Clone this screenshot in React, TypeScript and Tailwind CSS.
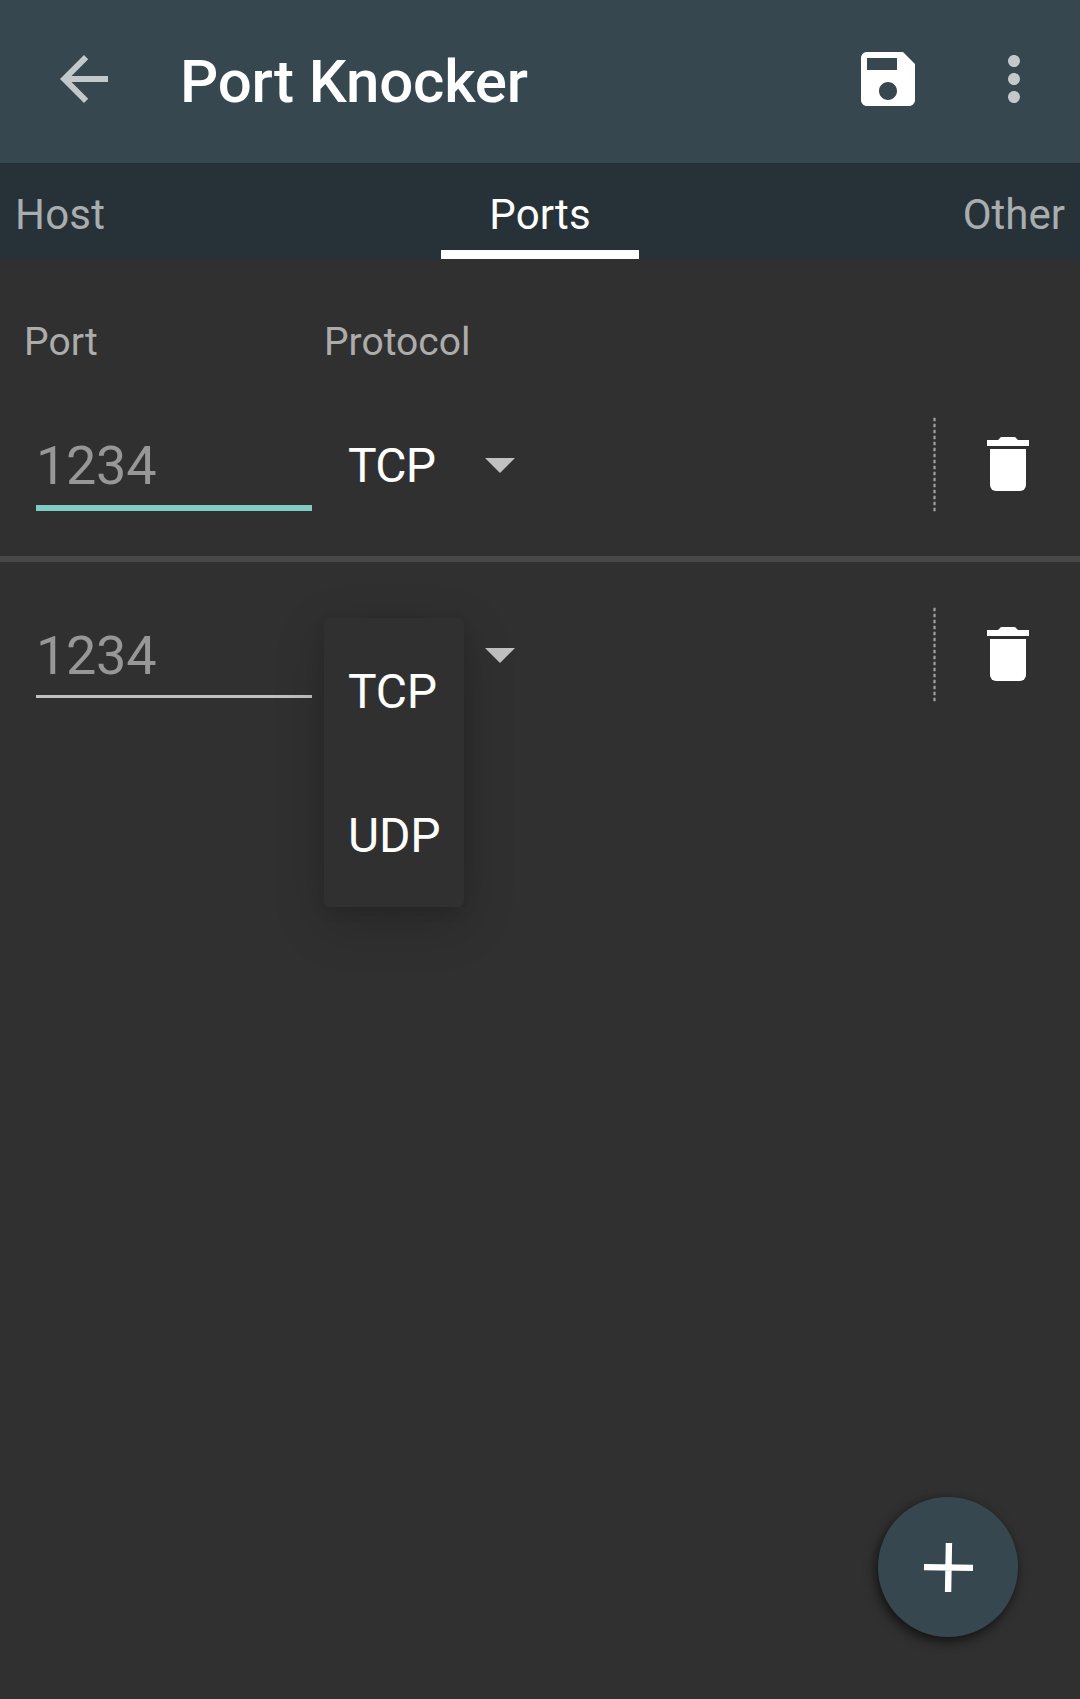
import React from "react";

const ARROW_BACK = "M20 11H7.83l5.59-5.59L12 4l-8 8 8 8 1.41-1.41L7.83 13H20v-2z";
const SAVE =
  "M17 3H5c-1.11 0-2 .9-2 2v14c0 1.1.89 2 2 2h14c1.1 0 2-.9 2-2V7l-4-4zm-5 16c-1.66 0-3-1.34-3-3s1.34-3 3-3 3 1.34 3 3-1.34 3-3 3zm3-10H5V5h10v4z";
const MORE =
  "M12 8c1.1 0 2-.9 2-2s-.9-2-2-2-2 .9-2 2 .9 2 2 2zm0 2c-1.1 0-2 .9-2 2s.9 2 2 2 2-.9 2-2-.9-2-2-2zm0 6c-1.1 0-2 .9-2 2s.9 2 2 2 2-.9 2-2-.9-2-2-2z";

function Icon({ d, className = "" }: { d: string; className?: string }) {
  return (
    <svg viewBox="0 0 24 24" className={`size-[72px] shrink-0 fill-current ${className}`}>
      <path d={d} />
    </svg>
  );
}

function TrashIcon() {
  return (
    <svg viewBox="0 0 72 72" className="size-[72px] fill-white">
      <path d="M15 12h11l3-3h14l3 3h11v6H15z" />
      <path d="M18 21h36v36a6 6 0 0 1-6 6H24a6 6 0 0 1-6-6z" />
    </svg>
  );
}

function DottedLine() {
  return (
    <svg viewBox="0 0 3 96" className="h-24 w-[3px]" stroke="#a0a0a0">
      <line x1="1.5" y1="1.8" x2="1.5" y2="96" strokeWidth="2.2" strokeDasharray="3.4 2.6" />
    </svg>
  );
}

function Dropdown() {
  return (
    <ul className="absolute top-[56px] left-0 z-10 h-[289px] w-[140px] rounded-[6px] bg-[#303030] shadow-[0_16px_52px_rgba(0,0,0,0.19),0_4px_14px_rgba(0,0,0,0.1)]">
      {["TCP", "UDP"].map((name) => (
        <li key={name} className="h-[144px] pt-[2px] pl-6 text-[48px] leading-[144px] tracking-[-0.2px]">
          {name}
        </li>
      ))}
    </ul>
  );
}

function PortRow({ focused = false, open = false }: { focused?: boolean; open?: boolean }) {
  return (
    <div className="flex h-[184px]">
      <div className="w-[324px] pr-3 pl-9">
        <div
          className={
            focused
              ? "h-[139px] border-b-[6px] border-[#80cbc4]"
              : "h-[136px] border-b-[3px] border-[#c1c1c1]"
          }
        >
          <span className="block pt-[62px] text-[54px] leading-[64px] tracking-[-0.3px] text-[#979797]">1234</span>
        </div>
      </div>
      <div className="relative flex w-[216px] items-center">
        <span className="w-[161px] pt-[3px] pl-6 text-[48px] leading-[56px] tracking-[-0.7px]">
          {open ? "" : "TCP"}
        </span>
        <svg viewBox="0 0 30 15" className="mt-[3px] h-[15px] w-[30px] fill-[#c1c1c1]">
          <path d="M0 0h30L15 15z" />
        </svg>
        {open && <Dropdown />}
      </div>
      <div className="ml-auto flex items-center gap-9 pr-9">
        <DottedLine />
        <TrashIcon />
      </div>
    </div>
  );
}

export default function App() {
  return (
    <main className="relative h-[1699px] w-[1080px] overflow-hidden bg-[#303030] font-[Roboto,sans-serif] text-white">
      <header className="flex h-[163px] items-center bg-[#37474f] pr-[30px] pl-12">
        <Icon d={ARROW_BACK} className="-mt-[5px] text-[#c3c8ca]" />
        <h1 className="ml-[60px] text-[60px] leading-[72px] font-medium tracking-[-0.17px]">Port Knocker</h1>
        <Icon d={SAVE} className="-mt-[5px] ml-auto" />
        <Icon d={MORE} className="-mt-[5px] ml-[54px] text-[#c3c8ca]" />
      </header>

      <nav className="grid h-24 grid-cols-[1fr_198px_1fr] bg-[#263238] pt-[7px] text-[42px] leading-[89px] text-[#a8adaf]">
        <span className="pl-[15px] tracking-[0.2px]">Host</span>
        <span className="h-[89px] border-b-9 border-white text-center tracking-[0.1px] text-white">Ports</span>
        <span className="pr-[15px] text-right">Other</span>
      </nav>

      <div className="flex h-[113px] pt-[59px] text-[39px] leading-[48px] text-[#acacac]">
        <span className="w-[324px] pl-6 tracking-[0.1px]">Port</span>
        <span>Protocol</span>
      </div>

      <PortRow focused />
      <div className="h-[6px] bg-[#484848]" />
      <PortRow open />

      <button className="absolute top-[1497px] left-[878px] flex size-[140px] items-center justify-center rounded-full bg-[#37474f] shadow-[-2px_4px_12px_rgba(0,0,0,0.65)]">
        <svg viewBox="0 0 50 50" className="size-[49px] rotate-1 overflow-visible" stroke="white" strokeWidth="6.5">
          <path d="M25 0v50M0 25h50" />
        </svg>
      </button>
    </main>
  );
}
